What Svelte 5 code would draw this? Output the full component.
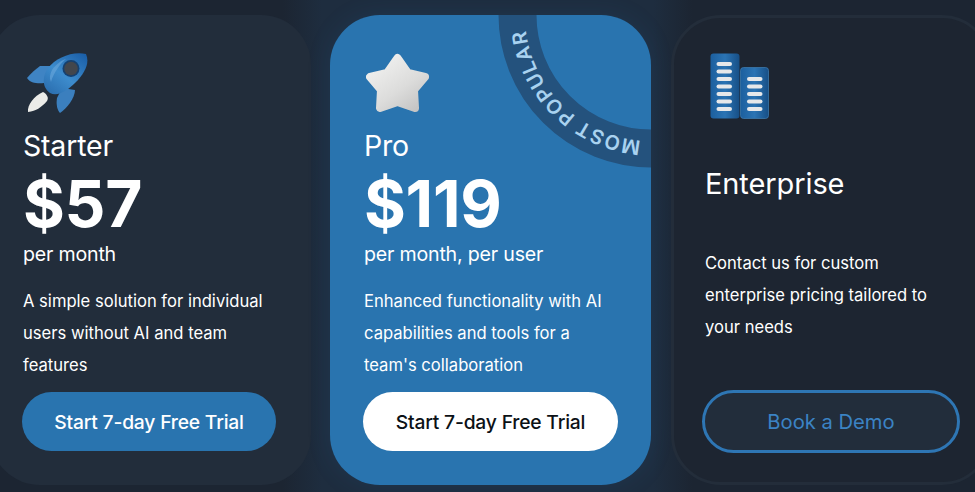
<script>
  const plans = [
    { key: 'starter', name: 'Starter', price: '$57', per: 'per month', desc: ['A simple solution for individual', 'users without AI and team', 'features'], cta: 'Start 7-day Free Trial' },
    { key: 'pro', name: 'Pro', price: '$119', per: 'per month, per user', desc: ['Enhanced functionality with AI', 'capabilities and tools for a', "team's collaboration"], cta: 'Start 7-day Free Trial' }
  ];
  const leftBars = [9, 16.5, 24, 31.5, 39, 46.5, 54];
  const rightBars = [24, 31.5, 39, 46.5, 54];
</script>

{#snippet rocket()}
  <svg class="icon" width="64" height="62" viewBox="25 55 64 62" aria-hidden="true">
    <defs>
      <linearGradient id="rb" x1="0.9" y1="0" x2="0.1" y2="1">
        <stop offset="0" stop-color="#1b5fa8" />
        <stop offset="0.55" stop-color="#3d8ccd" />
        <stop offset="1" stop-color="#2a6dae" />
      </linearGradient>
    </defs>
    <path d="M27 80 C31 75 36 71 40 68 L56 68 L44 85 C38 86 30 85 27 80Z" fill="#3f84c4" />
    <path d="M75 92 C75 100 67 110 60 115 C57 112 56 106 57 100 L62 90 Z" fill="#3b7fbe" />
    <path d="M86 56 C72 53 56 60 48 70 C42 78 42 90 50 95 C58 99 68 92 75 85 C85 75 90 65 86 56Z" fill="url(#rb)" />
    <path d="M52 72 C56 66 62 62 66 61 C60 66 54 74 51 84 C49 80 50 76 52 72Z" fill="#6aa9dc" opacity="0.6" />
    <path d="M28 114 C27 107 34 98 43 94 C47 96 49 100 47 103 C42 109 36 113 28 114Z" fill="#ebebe8" />
    <circle cx="71" cy="70.500" r="8.500" fill="#16406f" />
    <circle cx="71" cy="70.500" r="6.800" fill="#42464d" />
  </svg>
{/snippet}

{#snippet star()}
  <svg class="icon" width="64" height="62" viewBox="366 55 64 62" aria-hidden="true">
    <defs>
      <linearGradient id="sg" x1="0.1" y1="0" x2="0.9" y2="1">
        <stop offset="0" stop-color="#f2f2f1" />
        <stop offset="0.6" stop-color="#dcdcdb" />
        <stop offset="1" stop-color="#c4c4c4" />
      </linearGradient>
    </defs>
    <path d="M397.500 60 L408 75 L425 79 L414 92 L415 110 L397.500 104 L380 110 L381 92 L370 79 L387 75Z" fill="url(#sg)" stroke="url(#sg)" stroke-width="8" stroke-linejoin="round" />
  </svg>
{/snippet}

{#snippet building()}
  <svg class="icon" width="60" height="66" viewBox="0 0 60 66" aria-hidden="true">
    <defs>
      <linearGradient id="bg1" x1="0" y1="0" x2="1" y2="0">
        <stop offset="0" stop-color="#1c5f9e" />
        <stop offset="0.5" stop-color="#2b74b4" />
        <stop offset="1" stop-color="#174f86" />
      </linearGradient>
    </defs>
    <rect x="0.500" y="0.500" width="29" height="65" rx="3" fill="url(#bg1)" />
    <rect x="30.500" y="14.500" width="28" height="51" rx="3" fill="url(#bg1)" stroke="#3f7fb5" stroke-width="0.700" />
    {#each leftBars as y}
      <rect x="6.500" {y} width="15.500" height="4" rx="2" fill="#e6e8ea" />
    {/each}
    {#each rightBars as y}
      <rect x="37" {y} width="15.500" height="4" rx="2" fill="#e6e8ea" />
    {/each}
  </svg>
{/snippet}

<div class="page">
  <section class="row">
    {#each plans as p}
      <article class="card {p.key}">
        {#if p.key === 'starter'}{@render rocket()}{:else}{@render star()}{/if}
        <h2>{p.name}</h2>
        <div class="price">{p.price}</div>
        <div class="per">{p.per}</div>
        <p class="desc">{#each p.desc as line}<span>{line}</span>{/each}</p>
        <button class="cta">{p.cta}</button>
        {#if p.key === 'pro'}
          <svg class="ribbon" width="160" height="160" viewBox="0 0 160 160" aria-hidden="true">
            <circle cx="160" cy="0" r="133.500" fill="none" stroke="#24527d" stroke-width="38" />
            <path id="arc" d="M160 126 A126 126 0 0 1 34 0" fill="none" />
            <text class="ribbon-text"><textPath href="#arc" startOffset="10">MOST POPULAR</textPath></text>
          </svg>
        {/if}
      </article>
    {/each}
    <article class="card enterprise">
      {@render building()}
      <h2>Enterprise</h2>
      <p class="desc"><span>Contact us for custom</span><span>enterprise pricing tailored to</span><span>your needs</span></p>
      <button class="cta outline">Book a Demo</button>
    </article>
  </section>
</div>

<style>
  :global(body) {
    margin: 0;
    background: #1c2532;
  }
  .page {
    width: 975px;
    height: 492px;
    overflow: hidden;
    box-sizing: border-box;
    padding-top: 15px;
    font-family: Inter, Lato, "Liberation Sans", sans-serif;
    color: #fff;
    background: linear-gradient(90deg, #1c2532 0%, #1c2532 29%, #1e2d3f 33%, #1e2d3f 67%, #1c2532 71%);
  }
  .row {
    display: flex;
    gap: 19px;
    margin-left: -10px;
    width: 1010px;
  }
  .card {
    position: relative;
    flex: 0 0 321px;
    height: 470px;
    box-sizing: border-box;
    border-radius: 50px;
    padding: 38px 33px 34px;
    display: flex;
    flex-direction: column;
    overflow: hidden;
  }
  .starter {
    background: #222d3b;
  }
  .pro {
    background: #2974af;
    box-shadow: 0 0 24px rgba(41, 116, 175, 0.14);
    padding-left: 34px;
  }
  .enterprise {
    background: #1d2531;
    border: 3px solid #232d3a;
    margin-left: 1px;
    padding: 35px 32px 29px 31px;
  }
  .icon {
    display: block;
    flex: none;
    margin-left: 2px;
  }
  .enterprise .icon {
    margin-left: 5px;
  }
  h2 {
    margin: 13px 0 0;
    font-size: 28.500px;
    line-height: 36px;
    font-weight: 400;
    letter-spacing: -0.2px;
  }
  .enterprise h2 {
    margin-top: 47px;
    font-size: 29px;
    letter-spacing: -0.1px;
  }
  .price {
    margin-top: 5px;
    font-size: 64px;
    line-height: 70px;
    font-weight: 700;
    letter-spacing: -0.3px;
  }
  .per {
    font-size: 19.600px;
    line-height: 30px;
    letter-spacing: -0.2px;
  }
  .desc {
    margin: 16px 0 0;
    font-size: 16.600px;
    line-height: 32px;
  }
  .enterprise .desc {
    margin-top: 45px;
  }
  .desc span {
    display: block;
    white-space: nowrap;
  }
  .cta {
    margin-top: auto;
    margin-left: -1px;
    width: 254px;
    height: 59px;
    flex: none;
    border: 0;
    border-radius: 30px;
    background: #2974af;
    color: #fff;
    font-family: inherit;
    font-size: 19.300px;
    font-weight: 500;
    letter-spacing: -0.2px;
  }
  .pro .cta {
    background: #fff;
    color: #0c1116;
    width: 255px;
  }
  .cta.outline {
    width: 258px;
    height: 63px;
    margin-left: -3px;
    border-radius: 32px;
    background: #222d3b;
    border: 3px solid #2e76b4;
    color: #3b83c4;
    font-size: 20.200px;
    font-weight: 400;
    letter-spacing: 0;
  }
  .ribbon {
    position: absolute;
    top: 0;
    right: 0;
  }
  .ribbon-text {
    font-family: Inter, Lato, "Liberation Sans", sans-serif;
    font-size: 20px;
    font-weight: 600;
    letter-spacing: 1.100px;
    fill: #a9d2f0;
  }
</style>
